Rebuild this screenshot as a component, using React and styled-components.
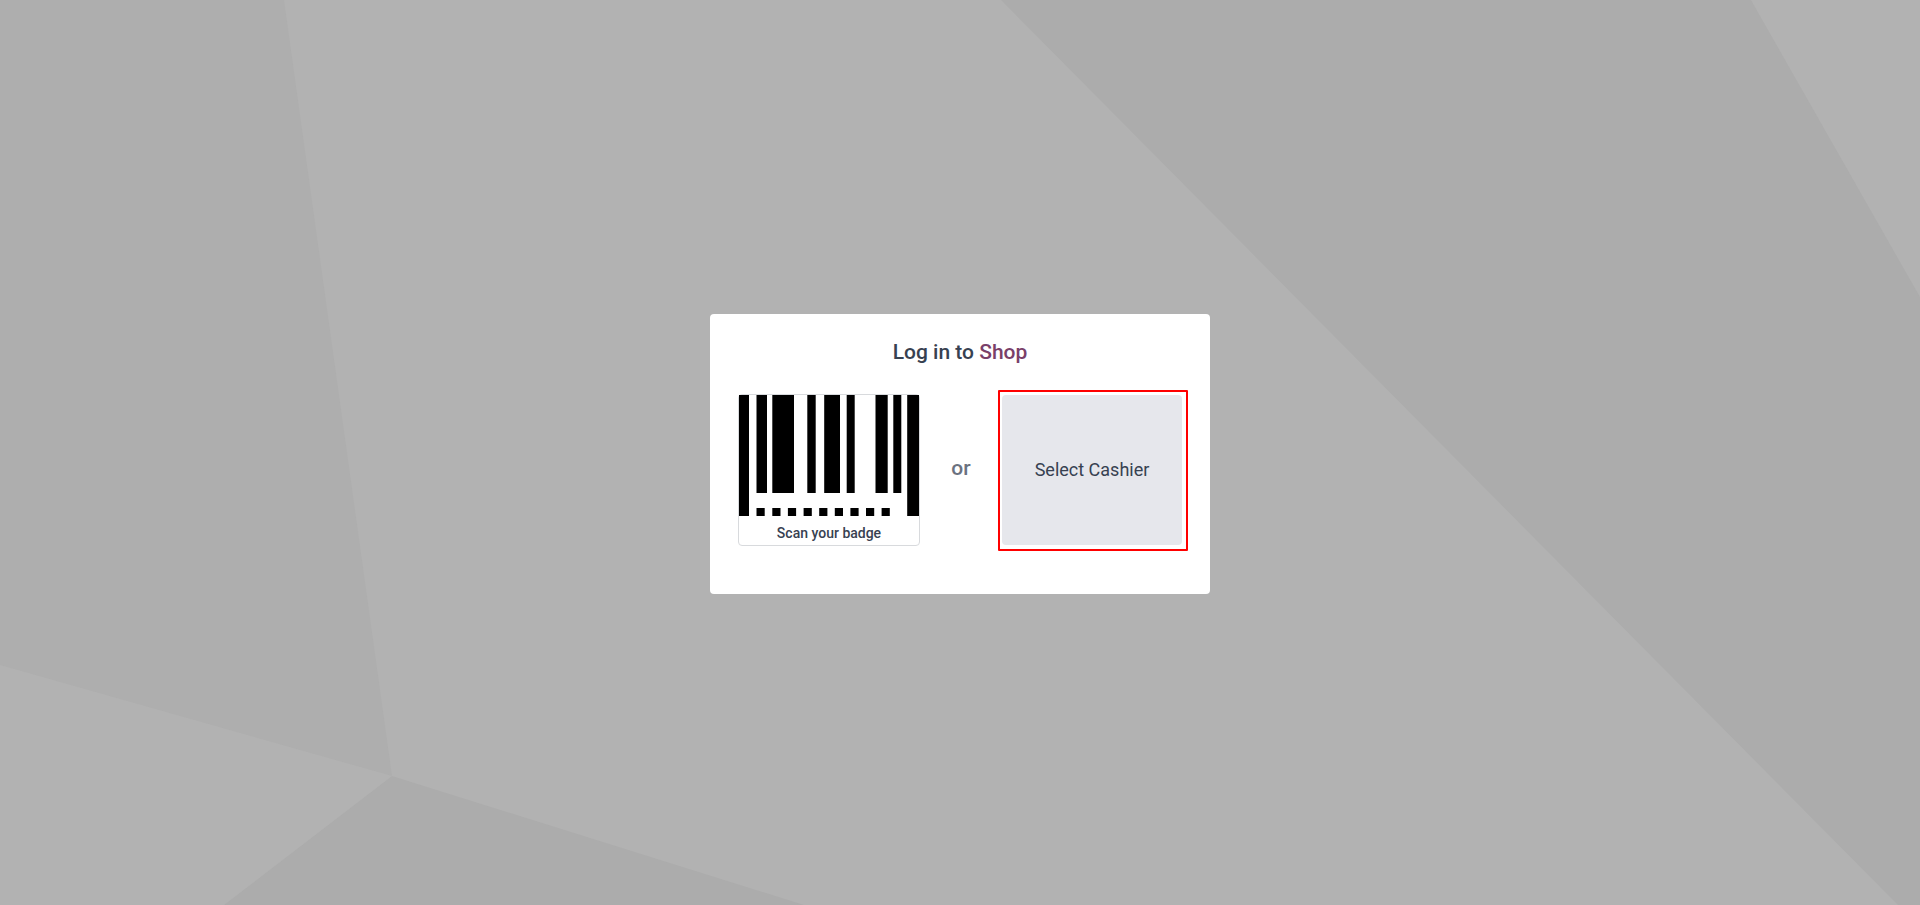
import React from "react";
import styled, { createGlobalStyle } from "styled-components";

const GlobalStyle = createGlobalStyle`
  *, *::before, *::after { box-sizing: border-box; }
  body {
    margin: 0;
    font-family: Roboto, "Liberation Sans", sans-serif;
    color: #374151;
    background: #b2b2b2;
  }
`;

const Page = styled.main`
  position: relative;
  display: flex;
  align-items: center;
  justify-content: center;
  min-height: 100vh;
  padding-top: 2px;
  overflow: hidden;
`;

const Backdrop = styled.svg`
  position: absolute;
  inset: 0;
  width: 100%;
  height: 100%;
`;

const Card = styled.section`
  position: relative;
  width: 500px;
  max-width: 100%;
  padding: 24px 28px 48px;
  border-radius: 4px;
  background: #fff;
`;

const Title = styled.h1`
  margin: 0 0 28px;
  font-size: 21px;
  font-weight: 500;
  line-height: 28px;
  text-align: center;
`;

const ShopName = styled.span`
  color: #7a4069;
`;

const Choices = styled.div`
  display: flex;
  align-items: center;
  justify-content: space-between;
`;

const Badge = styled.figure`
  width: 182px;
  height: 152px;
  margin: 0;
  border: 1px solid #d8dadd;
  border-radius: 4px;
`;

const Barcode = styled.svg`
  display: block;
  width: 100%;
  height: 121px;
`;

const Caption = styled.figcaption`
  padding-top: 6px;
  font-size: 14px;
  font-weight: 500;
  line-height: 22px;
  text-align: center;
`;

const Separator = styled.span`
  padding-bottom: 4px;
  color: #6b7280;
  font-size: 21px;
  font-weight: 500;
  line-height: 28px;
`;

const Highlight = styled.div`
  position: relative;

  &::after {
    content: "";
    position: absolute;
    inset: -5px -6px -6px -4px;
    border: 2px solid #f00;
    border-radius: 1px;
    pointer-events: none;
  }
`;

const CashierButton = styled.button`
  display: block;
  width: 180px;
  height: 150px;
  padding: 0;
  border: 0;
  border-radius: 4px;
  background: #e6e7ec;
  color: #374151;
  font-family: inherit;
  font-size: 18px;
  cursor: pointer;
`;

const BARS = [
  [0, 10, 121],
  [17.5, 10.5, 98],
  [33.3, 21.7, 98],
  [68.3, 8.4, 98],
  [85.2, 15.8, 98],
  [107.7, 8, 98],
  [136.5, 12.2, 98],
  [154.3, 8, 98],
  [168.2, 11.8, 121],
];

const DOTS = [17.5, 33.3, 48.9, 64.6, 80.2, 95.8, 111.4, 127, 142.6];

export default function App() {
  return (
    <>
      <GlobalStyle />
      <Page>
        <Backdrop viewBox="0 0 1920 905" preserveAspectRatio="none" aria-hidden="true">
          <polygon points="0,0 284,0 392,776 0,665" fill="#aeaeae" />
          <polygon points="392,776 804,905 224,905" fill="#acacac" />
          <polygon points="1001,0 1751,0 1920,297 1920,905 1898,905" fill="#acacac" />
        </Backdrop>
        <Card>
          <Title>
            Log in to <ShopName>Shop</ShopName>
          </Title>
          <Choices>
            <Badge>
              <Barcode viewBox="0 0 180 121" aria-hidden="true">
                {BARS.map(([x, width, height]) => (
                  <rect key={x} x={x} y="0" width={width} height={height} />
                ))}
                {DOTS.map((x) => (
                  <rect key={x} x={x} y="113" width="8.2" height="8" />
                ))}
              </Barcode>
              <Caption>Scan your badge</Caption>
            </Badge>
            <Separator>or</Separator>
            <Highlight>
              <CashierButton type="button">Select Cashier</CashierButton>
            </Highlight>
          </Choices>
        </Card>
      </Page>
    </>
  );
}
